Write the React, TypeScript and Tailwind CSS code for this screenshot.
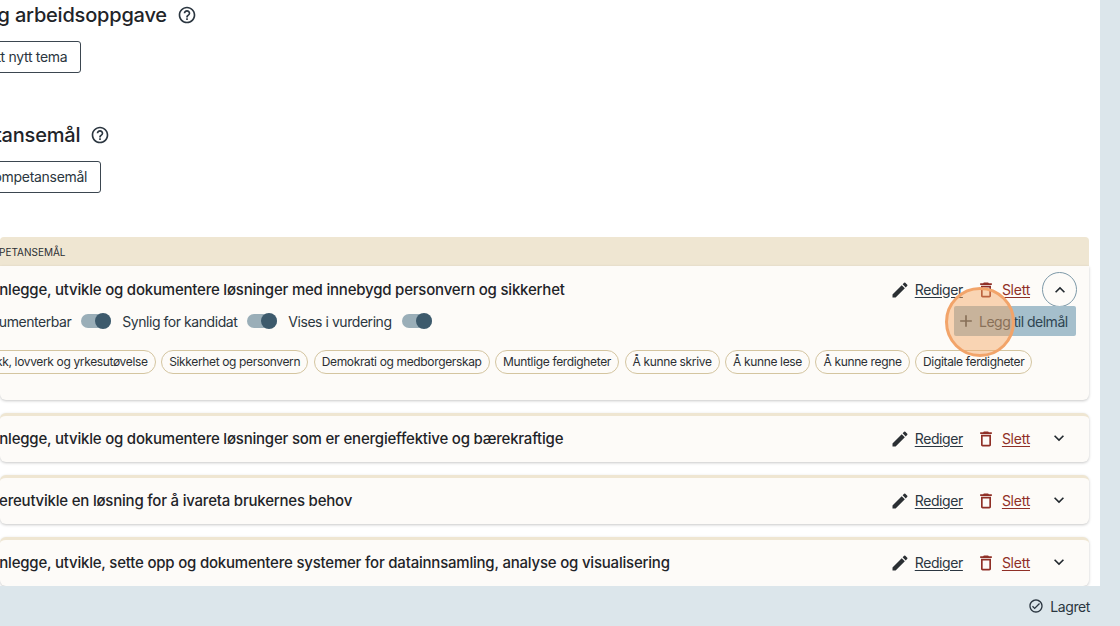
import { MdEdit, MdHelpOutline, MdOutlineCheckCircle, MdOutlineDelete, MdKeyboardArrowDown, MdKeyboardArrowUp, MdAdd } from "react-icons/md";

const TAGS = [
  "Etikk, lovverk og yrkesutøvelse",
  "Sikkerhet og personvern",
  "Demokrati og medborgerskap",
  "Muntlige ferdigheter",
  "Å kunne skrive",
  "Å kunne lese",
  "Å kunne regne",
  "Digitale ferdigheter",
];

const ROWS = [
  "Planlegge, utvikle og dokumentere løsninger som er energieffektive og bærekraftige",
  "Videreutvikle en løsning for å ivareta brukernes behov",
  "Planlegge, utvikle, sette opp og dokumentere systemer for datainnsamling, analyse og visualisering",
];

function Actions() {
  return (
    <div className="flex items-center">
      <MdEdit className="mr-[5px] text-[20px] text-[#2b2f33]" />
      <a className="mr-[13px] text-[14px] leading-5 tracking-[-0.4px] text-[#2b3640] underline underline-offset-2">Rediger</a>
      <MdOutlineDelete className="mr-[6px] text-[20px] text-[#8f2f26]" />
      <a className="text-[14px] leading-5 tracking-[-0.25px] text-[#8f2f26] underline underline-offset-2">Slett</a>
    </div>
  );
}

function Toggle() {
  return (
    <div className="relative h-[14px] w-[30px] rounded-full bg-[#9aaeb8]">
      <div className="absolute right-0 top-[-1px] h-4 w-4 rounded-full bg-[#3d5a6c]" />
    </div>
  );
}

function Tag({ label }: { label: string }) {
  return (
    <span className="flex h-6 shrink-0 items-center rounded-full border border-[#d4c5a0] px-[7px] text-[12px] tracking-[-0.35px] text-[#2b2f33]">
      {label}
    </span>
  );
}

export default function App() {
  return (
    <div className="relative flex h-[626px] w-[1120px] flex-col overflow-hidden bg-[#dce6eb] font-['Inter',sans-serif] text-[#1f2428]">
      <main className="h-[586px] w-[1100px] flex-none overflow-hidden bg-white pr-[11px]">
        <div className="ml-[-71px] flex h-[30px] items-center gap-[10px]">
          <h2 className="text-[20px] font-[450] leading-[30px] tracking-[-0.2px]">Tema og arbeidsoppgave</h2>
          <MdHelpOutline className="text-[20px] text-[#2b3640]" />
        </div>
        <button className="ml-[-57px] mt-[11px] block h-8 rounded-[3px] border border-[#3b4650] px-[13px] pb-px text-[14px] tracking-[-0.3px] text-[#2b3640]">
          Opprett nytt tema
        </button>

        <div className="ml-[-71px] mt-[47px] flex h-[30px] items-center gap-[10px]">
          <h2 className="text-[20px] font-[450] leading-[30px] tracking-[-0.2px]">Kompetansemål</h2>
          <MdHelpOutline className="text-[20px] text-[#2b3640]" />
        </div>
        <button className="ml-[-79px] mt-[11px] block h-8 rounded-[3px] border border-[#3b4650] px-[13px] pb-px text-[14px] tracking-[-0.3px] text-[#2b3640]">
          Opprett kompetansemål
        </button>

        <section className="mt-11">
          <div className="flex h-[29px] items-center rounded-t-[4px] bg-[#efe6d2] pt-px">
            <span className="ml-[-24px] text-[10px] font-normal uppercase tracking-normal text-[#2b2f33]">Kompetansemål</span>
          </div>
          <div className="relative h-[134px] rounded-b-[6px] bg-[#fdfbf8] shadow-[0_1px_3px_rgba(0,0,0,0.22)]">
            <div className="flex h-[41px] items-start justify-between pr-[12px] pt-[6px]">
              <span className="ml-[-22px] whitespace-nowrap text-[15px] font-[450] leading-[35px] tracking-[-0.21px]">
                Planlegge, utvikle og dokumentere løsninger med innebygd personvern og sikkerhet
              </span>
              <div className="flex items-center gap-[12px]">
                <Actions />
                <button className="flex h-[35px] w-[35px] items-center justify-center rounded-full border-[1.5px] border-[#7d99a8]">
                  <MdKeyboardArrowUp className="text-[20px] text-[#22292f]" />
                </button>
              </div>
            </div>
            <div className="-mt-px flex h-[30px] items-center justify-between pr-[13px] text-[14px] tracking-[-0.45px] text-[#2b3640]">
              <div className="ml-[-26px] flex items-center">
                <span className="mr-[10px]">Dokumenterbar</span>
                <Toggle />
                <span className="ml-[11px] mr-[10px]">Synlig for kandidat</span>
                <Toggle />
                <span className="ml-[11px] mr-[10px]">Vises i vurdering</span>
                <Toggle />
              </div>
              <button className="flex h-[30px] w-[122px] items-center gap-[3px] whitespace-nowrap rounded-[2px] bg-[#a5bfcc] pl-[2px] text-[14px] tracking-[-0.5px] text-[#2f4552]">
                <MdAdd className="text-[20px]" />
                Legg til delmål
              </button>
            </div>
            <div className="ml-[-25px] mt-[14px] flex gap-[5.5px]">
              {TAGS.map((tag) => (
                <Tag key={tag} label={tag} />
              ))}
            </div>
            <div className="absolute left-[945px] top-[21px] h-[70px] w-[70px] rounded-full border-[3px] border-[#f2a46a] bg-[#f4a45f]/45" />
          </div>
        </section>

        {ROWS.map((row, index) => (
          <div
            key={row}
            className="mt-[13px] flex h-[49px] items-center justify-between rounded-[6px] border-t-[3px] border-[#efe6d2] bg-[#fdfbf8] pr-[20px] shadow-[0_1px_3px_rgba(0,0,0,0.22)]"
          >
            <span className={`${index === 1 ? "ml-[-24px]" : "ml-[-22px]"} mt-px whitespace-nowrap text-[15px] font-[450] tracking-[-0.21px]`}>{row}</span>
            <div className="flex items-center gap-[19px]">
              <Actions />
              <MdKeyboardArrowDown className="-mt-[2px] text-[20px] text-[#22292f]" />
            </div>
          </div>
        ))}
      </main>
      <footer className="flex h-10 flex-none items-center justify-end pr-[30px] text-[14px] tracking-[-0.4px] text-[#2b3640]">
        <MdOutlineCheckCircle className="mr-[6px] text-[16px]" />
        Lagret
      </footer>
    </div>
  );
}
